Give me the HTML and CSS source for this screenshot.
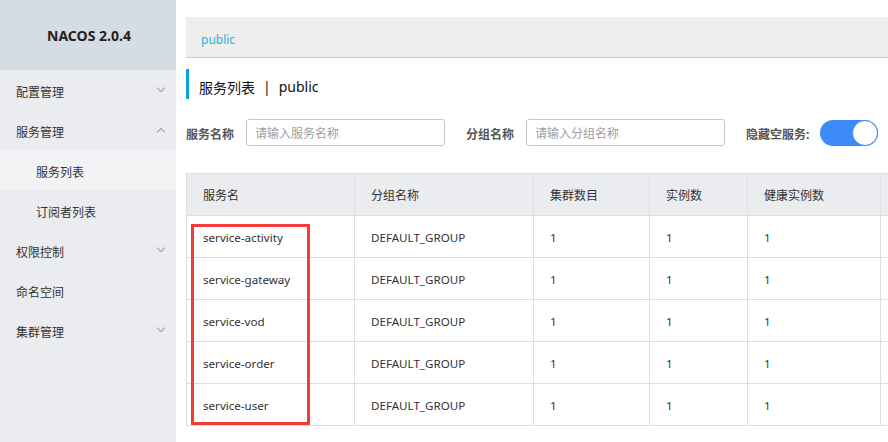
FILE: index.html
```html
<!DOCTYPE html>
<html lang="zh">
<head>
<meta charset="utf-8">
<link rel="stylesheet" href="styles.css">
</head>
<body>
<div class="app">
  <aside class="sidebar">
    <div class="brand">NACOS 2.0.4</div>
    <ul class="menu">
      <li class="item">配置管理<span class="chev down"></span></li>
      <li class="item">服务管理<span class="chev up"></span></li>
      <li class="item sub active">服务列表</li>
      <li class="item sub">订阅者列表</li>
      <li class="item">权限控制<span class="chev down"></span></li>
      <li class="item">命名空间</li>
      <li class="item">集群管理<span class="chev down"></span></li>
    </ul>
  </aside>
  <main class="main">
    <div class="crumb"><span class="ns">public</span></div>
    <h1 class="title">服务列表<span class="sep">|</span>public</h1>
    <div class="search">
      <label class="lbl">服务名称</label>
      <input class="inp" placeholder="请输入服务名称">
      <label class="lbl lbl2">分组名称</label>
      <input class="inp" placeholder="请输入分组名称">
      <label class="lbl lbl3">隐藏空服务:</label>
      <span class="toggle"><span class="knob"></span></span>
    </div>
    <div class="table-wrap">
      <table class="tbl">
        <colgroup>
          <col class="c1"><col class="c2"><col class="c3"><col class="c4"><col class="c5"><col class="c6">
        </colgroup>
        <thead>
          <tr><th>服务名</th><th>分组名称</th><th>集群数目</th><th>实例数</th><th>健康实例数</th><th></th></tr>
        </thead>
        <tbody>
          <tr><td>service-activity</td><td>DEFAULT_GROUP</td><td>1</td><td>1</td><td>1</td><td></td></tr>
          <tr><td>service-gateway</td><td>DEFAULT_GROUP</td><td>1</td><td>1</td><td>1</td><td></td></tr>
          <tr><td>service-vod</td><td>DEFAULT_GROUP</td><td>1</td><td>1</td><td>1</td><td></td></tr>
          <tr><td>service-order</td><td>DEFAULT_GROUP</td><td>1</td><td>1</td><td>1</td><td></td></tr>
          <tr><td>service-user</td><td>DEFAULT_GROUP</td><td>1</td><td>1</td><td>1</td><td></td></tr>
        </tbody>
      </table>
      <div class="highlight"></div>
    </div>
  </main>
</div>
</body>
</html>
```
FILE: styles.css
```css
* { box-sizing: border-box; }
html, body { margin: 0; padding: 0; background: #fff; }
body {
  font-family: "Noto Sans", "Noto Sans CJK SC", sans-serif;
  font-size: 12px;
  color: #333;
  overflow: hidden;
  width: 888px;
  height: 442px;
}
.app { display: flex; height: 442px; }
.sidebar {
  width: 176px;
  flex: none;
  background: #ebecf0;
  height: 100%;
}
.brand {
  height: 70px;
  background: #d6dce3;
  display: flex;
  align-items: center;
  justify-content: center;
  font-weight: bold;
  font-size: 14px;
  color: #222;
  padding: 1px 0 0 2px;
}
.menu { list-style: none; margin: 0; padding: 0; }
.item {
  height: 40px;
  display: flex;
  align-items: center;
  padding: 3px 0 0 16px;
  position: relative;
  font-size: 12px;
  color: #333;
}
.item.sub { padding-left: 36px; }
.item.active { background: #f2f3f5; }
.chev {
  position: absolute;
  right: 12px;
  top: 18px;
  width: 6px;
  height: 6px;
  border-right: 1px solid #9a9fa8;
  border-bottom: 1px solid #9a9fa8;
}
.chev.down { transform: rotate(45deg); top: 15px; }
.chev.up { transform: rotate(-135deg); top: 19px; }
.main {
  flex: 1;
  min-width: 0;
  padding: 17px 0 0 10px;
  overflow: hidden;
}
.crumb {
  height: 41px;
  background: #eeeeee;
  border-bottom: 1px solid #cccccc;
  display: flex;
  align-items: center;
  padding: 4px 0 0 15px;
}
.ns { color: #2bb2d8; font-size: 12px; }
.title {
  margin: 11px 0 0 0;
  height: 30px;
  border-left: 3px solid #0aa0d8;
  padding: 5px 0 0 10px;
  display: flex;
  align-items: center;
  font-size: 14px;
  font-weight: normal;
  color: #111;
}
.sep { margin: 0 8px; }
.search {
  margin-top: 20px;
  height: 27px;
  display: flex;
  align-items: center;
  white-space: nowrap;
}
.lbl { font-weight: bold; color: #555; font-size: 12px; margin-right: 12px; padding-top: 2px; }
.lbl2 { margin-left: 21px; }
.lbl3 { margin-left: 21px; margin-right: 11px; }
.inp {
  width: 199px;
  height: 27px;
  border: 1px solid #c4c6cf;
  border-radius: 3px;
  padding: 2px 8px 0 8px;
  font-family: "Noto Sans", "Noto Sans CJK SC", sans-serif;
  font-size: 12px;
  outline: none;
}
.inp::placeholder { color: #a0a0a0; }
.toggle {
  width: 58px;
  height: 26px;
  border-radius: 13px;
  background: #3e8bf7;
  position: relative;
  flex: none;
}
.knob {
  position: absolute;
  right: 0;
  top: 0;
  width: 26px;
  height: 26px;
  border-radius: 50%;
  background: #fff;
  border: 1px solid #3e8bf7;
}
.table-wrap { margin-top: 27px; position: relative; width: 900px; }
.tbl {
  border-collapse: collapse;
  table-layout: fixed;
  width: 900px;
}
.c1 { width: 168px; }
.c2 { width: 179px; }
.c3 { width: 116px; }
.c4 { width: 98px; }
.c5 { width: 133px; }
.c6 { width: 206px; }
.tbl th, .tbl td {
  border: 1px solid #dcdee3;
  height: 42px;
  padding: 1px 0 0 16px;
  text-align: left;
  font-weight: normal;
  font-size: 12px;
  color: #333;
  white-space: nowrap;
  overflow: hidden;
}
.tbl td { font-size: 11.6px; }
.tbl th { background: #ebecf0; }
.highlight {
  position: absolute;
  left: 5px;
  top: 51px;
  width: 119px;
  height: 201px;
  border: 3px solid #f23b3b;
}
```
